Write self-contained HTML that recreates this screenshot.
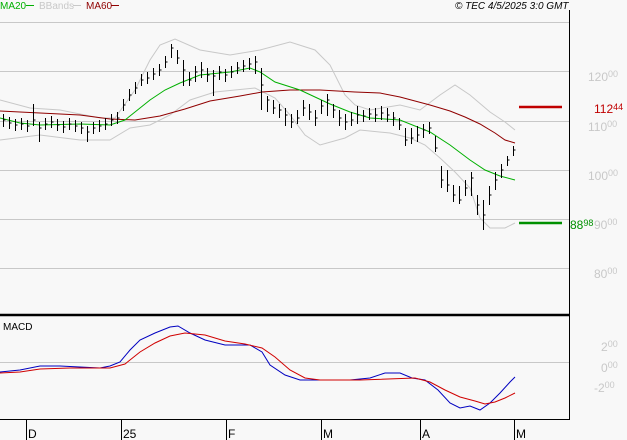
<!DOCTYPE html><html><head><style>body{margin:0;background:#f8f8f8}svg{display:block;font-family:"Liberation Sans",sans-serif}</style></head><body>
<svg width="627" height="440" viewBox="0 0 627 440" xmlns="http://www.w3.org/2000/svg">
<rect width="627" height="440" fill="#f8f8f8"/>
<g stroke="#c8c8c8" stroke-width="1">
<line x1="0" y1="22.5" x2="569" y2="22.5"/><line x1="0" y1="71.5" x2="569" y2="71.5"/><line x1="0" y1="121.5" x2="569" y2="121.5"/><line x1="0" y1="170.5" x2="569" y2="170.5"/><line x1="0" y1="219.5" x2="569" y2="219.5"/><line x1="0" y1="268.5" x2="569" y2="268.5"/><line x1="0" y1="362.5" x2="569" y2="362.5"/>
</g>
<line x1="569.5" y1="10" x2="569.5" y2="420" stroke="#000"/>
<line x1="0" y1="315" x2="569" y2="315" stroke="#000" stroke-width="2.5"/>
<line x1="0" y1="419.5" x2="569" y2="419.5" stroke="#000"/>
<g stroke="#000"><line x1="26.5" y1="419" x2="26.5" y2="440"/><line x1="121.5" y1="419" x2="121.5" y2="440"/><line x1="226.5" y1="419" x2="226.5" y2="440"/><line x1="321.5" y1="419" x2="321.5" y2="440"/><line x1="420.5" y1="419" x2="420.5" y2="440"/><line x1="514.5" y1="419" x2="514.5" y2="440"/></g>
<g font-size="12" fill="#000"><text x="28" y="438">D</text><text x="123" y="438">25</text><text x="228" y="438">F</text><text x="323" y="438">M</text><text x="422" y="438">A</text><text x="516" y="438">M</text></g>
<g fill="none" stroke-width="1">
<polyline stroke="#c8c8c8" points="0,100 30,108 60,110 100,118 115,118 135,90 150,60 160,45 175,39 200,50 230,55 260,50 290,42 315,50 330,65 345,95 355,105 370,110 400,105 420,110 440,95 455,85 470,95 490,112 505,122 515,130"/>
<polyline stroke="#c8c8c8" points="0,140 40,135 80,140 110,140 130,128 150,125 170,115 190,100 215,92 255,88 275,98 290,115 305,135 320,145 345,138 360,130 390,133 410,138 425,145 440,158 455,172 470,188 480,218 490,228 505,228 515,223"/>
<polyline stroke="#900000" points="0,111 40,113 80,115 110,119 135,120 160,116 185,109 210,101 240,96 262,92 290,90 320,90 355,92 380,93 400,97 430,105 450,111 465,117 480,124 495,133 505,140 515,143"/>
<polyline stroke="#00b000" points="0,118 20,123 40,125 80,124 110,125 125,120 135,112 150,100 165,90 180,83 200,75 230,72 250,68 260,72 275,82 300,90 330,104 350,112 370,118 400,120 430,132 450,145 470,160 485,170 500,176 515,180"/>
<polyline stroke="#0000c0" points="0,372 20,370 40,366 60,366 100,368 110,366 120,362 130,350 140,340 155,333 170,327 178,326 190,333 205,340 225,345 250,345 262,352 270,365 285,375 300,380 320,380 350,380 370,378 385,373 400,373 412,378 425,380 438,390 450,403 460,408 470,406 480,410 490,403 500,393 510,382 515,377"/>
<polyline stroke="#d00000" points="0,373 20,372 40,369 70,368 110,368 125,364 140,352 155,343 170,336 185,333 205,335 225,341 245,344 262,348 275,357 290,370 305,378 320,380 360,380 415,378 430,382 445,390 460,397 475,401 485,404 495,402 505,398 515,393"/>
</g>
<path stroke="#000" stroke-width="1" fill="none" id="bars" d="M3.5 114V127M3.5 120h2M9.5 117V129M9.5 123h2M15.5 119V131M15.5 125h2M21.5 118V130M21.5 124h2M27.5 120V132M27.5 126h2M33.5 104V126M33.5 120h2M39.5 122V142M39.5 128h2M45.5 118V130M45.5 124h2M51.5 116V128M51.5 122h2M57.5 119V131M57.5 125h2M63.5 121V133M63.5 127h2M69.5 118V130M69.5 124h2M75.5 120V132M75.5 126h2M81.5 122V134M81.5 128h2M87.5 126V142M87.5 132h2M93.5 122V134M93.5 128h2M99.5 120V132M99.5 126h2M105.5 118V130M105.5 124h2M111.5 114V126M111.5 120h2M117.5 112V124M117.5 118h2M123.5 99V111M123.5 105h2M129.5 89V101M129.5 95h2M135.5 82V94M135.5 88h2M141.5 74V86M141.5 80h2M147.5 72V84M147.5 78h2M153.5 68V80M153.5 74h2M159.5 64V76M159.5 70h2M165.5 56V68M165.5 62h2M171.5 44V58M171.5 48h2M177.5 50V64M177.5 58h2M183.5 60V86M183.5 70h2M189.5 72V86M189.5 80h2M195.5 66V82M195.5 72h2M201.5 62V78M201.5 70h2M207.5 68V82M207.5 75h2M213.5 70V96M213.5 76h2M219.5 66V80M219.5 72h2M225.5 69V82M225.5 75h2M231.5 66V78M231.5 72h2M237.5 62V74M237.5 68h2M243.5 60V72M243.5 66h2M249.5 58V70M249.5 64h2M255.5 56V74M255.5 62h2M261.5 68V110M261.5 85h2M267.5 96V112M267.5 100h2M273.5 100V114M273.5 108h2M279.5 104V118M279.5 110h2M285.5 108V126M285.5 115h2M291.5 114V128M291.5 122h2M297.5 110V124M297.5 118h2M303.5 100V116M303.5 108h2M309.5 104V120M309.5 112h2M315.5 110V126M315.5 118h2M321.5 100V114M321.5 106h2M327.5 94V116M327.5 100h2M333.5 104V118M333.5 110h2M339.5 110V126M339.5 118h2M345.5 114V130M345.5 122h2M351.5 112V126M351.5 120h2M357.5 106V124M357.5 115h2M363.5 110V122M363.5 116h2M369.5 108V120M369.5 114h2M375.5 108V122M375.5 115h2M381.5 106V120M381.5 113h2M387.5 108V122M387.5 115h2M393.5 112V126M393.5 118h2M399.5 118V130M399.5 125h2M405.5 128V146M405.5 140h2M411.5 128V144M411.5 138h2M417.5 126V142M417.5 135h2M423.5 124V138M423.5 130h2M429.5 122V134M429.5 128h2M435.5 136V152M435.5 148h2M441.5 166V188M441.5 180h2M447.5 170V192M447.5 185h2M453.5 185V202M453.5 195h2M459.5 186V204M459.5 200h2M465.5 180V196M465.5 188h2M471.5 172V196M471.5 178h2M477.5 195V215M477.5 205h2M483.5 200V230M483.5 215h2M489.5 186V205M489.5 195h2M495.5 172V190M495.5 180h2M501.5 164V178M501.5 170h2M507.5 156V166M507.5 160h2M513.5 146V156M513.5 150h2"/>
<line x1="519" y1="107" x2="562" y2="107" stroke="#c00000" stroke-width="2.5"/>
<line x1="519" y1="223" x2="562" y2="223" stroke="#009000" stroke-width="2.5"/>
<g font-size="12" fill="#c8c8c8">
<text x="588" y="81">120<tspan font-size="9" dy="-4">00</tspan></text>
<text x="588" y="131">110<tspan font-size="9" dy="-4">00</tspan></text>
<text x="588" y="180">100<tspan font-size="9" dy="-4">00</tspan></text>
<text x="594" y="229">90<tspan font-size="9" dy="-4">00</tspan></text>
<text x="594" y="278">80<tspan font-size="9" dy="-4">00</tspan></text>
<text x="601" y="351">2<tspan font-size="9" dy="-4">00</tspan></text>
<text x="601" y="372">0<tspan font-size="9" dy="-4">00</tspan></text>
<text x="594" y="392">-2<tspan font-size="9" dy="-4">00</tspan></text>
</g>
<text x="594" y="113" font-size="12" fill="#c00000">112<tspan font-size="9" dy="-3">44</tspan></text>
<text x="570" y="229" font-size="12" fill="#009000">88<tspan font-size="9" dy="-3">98</tspan></text>
<g font-size="10"><text x="0" y="9" fill="#00b000">MA20</text><line x1="26" y1="5.5" x2="34" y2="5.5" stroke="#00b000"/>
<text x="39" y="9" fill="#c8c8c8">BBands</text><line x1="73" y1="5.5" x2="81" y2="5.5" stroke="#c8c8c8"/>
<text x="86" y="9" fill="#900000">MA60</text><line x1="111" y1="5.5" x2="119" y2="5.5" stroke="#900000"/>
<text x="455" y="9" font-style="italic" fill="#000">© TEC 4/5/2025 3:0 GMT</text>
<text x="3" y="330" fill="#000">MACD</text></g>
</svg></body></html>
